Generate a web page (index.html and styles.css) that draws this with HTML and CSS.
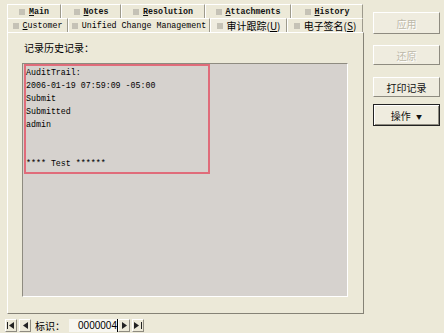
FILE: index.html
```html
<!DOCTYPE html>
<html lang="zh">
<head>
  <meta charset="UTF-8">
  <title>记录历史记录</title>
  <link rel="stylesheet" href="styles.css">
</head>
<body>
  <div class="app">
    <!-- Tabs + panel -->
    <div class="main">
      <div class="tab-row back">
        <div class="tab w54"><span class="sq"></span><span class="lbl"><u>M</u>ain</span></div>
        <div class="tab w60"><span class="sq"></span><span class="lbl"><u>N</u>otes</span></div>
        <div class="tab w84"><span class="sq"></span><span class="lbl"><u>R</u>esolution</span></div>
        <div class="tab w86"><span class="sq"></span><span class="lbl"><u>A</u>ttachments</span></div>
        <div class="tab w72"><span class="sq"></span><span class="lbl"><u>H</u>istory</span></div>
      </div>
      <div class="tab-row front">
        <div class="tab w61"><span class="sq"></span><span class="lbl"><u>C</u>ustomer</span></div>
        <div class="tab w142"><span class="sq"></span><span class="lbl">Unified Change Management</span></div>
        <div class="tab w77 active"><span class="sq"></span><span class="lbl cjk">审计跟踪(<u>U</u>)</span></div>
        <div class="tab w76"><span class="sq"></span><span class="lbl cjk">电子签名(<u>S</u>)</span></div>
      </div>
      <div class="panel">
        <div class="caption">记录历史记录：</div>
        <div class="log">
          <div class="trail">
            <div>AuditTrail:</div>
            <div>2006-01-19 07:59:09 -05:00</div>
            <div>Submit</div>
            <div>Submitted</div>
            <div>admin</div>
            <div>&nbsp;</div>
            <div>&nbsp;</div>
            <div>**** Test ******</div>
          </div>
        </div>
      </div>
    </div>

    <!-- Right side buttons -->
    <div class="actions">
      <button class="btn first" disabled>应用</button>
      <button class="btn" disabled>还原</button>
      <button class="btn">打印记录</button>
      <button class="btn menu">操作 <span class="arrow">&#9660;</span></button>
    </div>

    <!-- Record navigator -->
    <div class="nav">
      <span class="nbtn">
        <svg width="8" height="7" viewBox="0 0 8 7"><rect x="0" y="0" width="1" height="7" fill="#222"/><polygon points="7,0 2,3.5 7,7" fill="#222"/></svg>
      </span>
      <span class="nbtn">
        <svg width="5" height="7" viewBox="0 0 5 7"><polygon points="5,0 0,3.5 5,7" fill="#222"/></svg>
      </span>
      <span class="nlabel">标识：</span>
      <span class="nfield">0000004</span>
      <span class="nbtn">
        <svg width="5" height="7" viewBox="0 0 5 7"><polygon points="0,0 5,3.5 0,7" fill="#222"/></svg>
      </span>
      <span class="nbtn">
        <svg width="8" height="7" viewBox="0 0 8 7"><polygon points="0,0 5,3.5 0,7" fill="#222"/><rect x="7" y="0" width="1" height="7" fill="#222"/></svg>
      </span>
    </div>
  </div>
</body>
</html>
```

FILE: styles.css
```css
/* ===== Base ===== */
* {
  margin: 0;
  padding: 0;
  box-sizing: border-box;
}
html, body {
  width: 444px;
  height: 333px;
  overflow: hidden;
}
body {
  background: #ece9d8;
  color: #000;
  font-family: "Noto Sans CJK SC", "Liberation Sans", sans-serif;
  font-size: 10px;
}
.app {
  display: grid;
  grid-template-columns: 364px 80px;
  grid-template-rows: 314px 19px;
}

/* ===== Tabs ===== */
.main {
  padding: 4px 0 0 7px;
}
.tab-row {
  display: flex;
  height: 14px;
}
.tab {
  display: flex;
  align-items: center;
  justify-content: center;
  gap: 4px;
  height: 14px;
  border-top: 1px solid #fff;
  border-left: 1px solid #fff;
  border-right: 1px solid #9d9a8c;
}
.tab.active {
  background: #efecdf;
}
.w54 { width: 54px; }
.w60 { width: 60px; }
.w84 { width: 84px; }
.w86 { width: 86px; }
.w72 { width: 72px; }
.w61 { width: 61px; }
.w142 { width: 142px; }
.w77 { width: 77px; }
.w76 { width: 76px; }
.sq {
  width: 6px;
  height: 6px;
  background: #c5c2b6;
}
.lbl {
  font-family: "Liberation Mono", monospace;
  font-size: 8.3px;
  font-weight: bold;
  line-height: 12px;
  color: #111;
}
.front .lbl {
  font-weight: normal;
  color: #000;
}
.lbl.cjk {
  font-family: "Noto Sans CJK SC", sans-serif;
  font-size: 10px;
  font-weight: normal;
}

/* ===== Panel ===== */
.panel {
  height: 282px;
  width: 357px;
  border-left: 1px solid #fff;
  border-top: 1px solid #fff;
  border-right: 1px solid #858276;
  border-bottom: 1px solid #858276;
  padding: 8px 0 0 14px;
}
.caption {
  line-height: 14px;
  height: 14px;
  padding-left: 2px;
  margin-bottom: 8px;
}
.log {
  width: 326px;
  height: 234px;
  background: #d6d2ce;
  border-top: 1px solid #8e8b80;
  border-left: 1px solid #8e8b80;
  border-right: 1px solid #fff;
  border-bottom: 1px solid #fff;
}
.trail {
  width: 186px;
  height: 110px;
  margin-left: 1px;
  border: 2px solid #e06c7a;
  font-family: "Liberation Mono", monospace;
  font-size: 8.3px;
  line-height: 13px;
  color: #000;
}

/* ===== Right buttons ===== */
.actions {
  display: flex;
  flex-direction: column;
  padding: 12px 0 0 9px;
  gap: 12px;
}
.btn {
  width: 67px;
  height: 20px;
  background: #efecdf;
  font-family: "Noto Sans CJK SC", sans-serif;
  font-size: 10px;
  color: #111;
  border: 1px solid;
  border-color: #fff #8e8b80 #8e8b80 #fff;
}
.btn.first {
  height: 22px;
  margin-bottom: -1px;
}
.btn:disabled {
  color: #bdb9aa;
  text-shadow: 1px 1px 0 #fff;
}
.btn.menu {
  margin-top: -5px;
  height: 22px;
  border: 1px solid #222;
  box-shadow: inset 1px 1px 0 #fff, inset -1px -1px 0 #8e8b80;
}
.arrow {
  font-size: 6px;
  margin-left: 3px;
  vertical-align: 1px;
}

/* ===== Navigator ===== */
.nav {
  grid-column: 1 / 3;
  display: flex;
  align-items: center;
  height: 14px;
  padding-left: 5px;
  margin-top: 4px;
}
.nbtn {
  display: flex;
  align-items: center;
  justify-content: center;
  width: 12px;
  height: 13px;
  margin-right: 2px;
  border: 1px solid;
  border-color: #fff #8e8b80 #8e8b80 #fff;
}
.nlabel {
  margin: 0 4px 0 2px;
  line-height: 13px;
}
.nfield {
  width: 49px;
  height: 13px;
  background: #f7f6f0;
  border-right: 1px solid #000;
  font-family: "Liberation Sans", sans-serif;
  font-size: 10px;
  line-height: 13px;
  text-align: right;
}
```
